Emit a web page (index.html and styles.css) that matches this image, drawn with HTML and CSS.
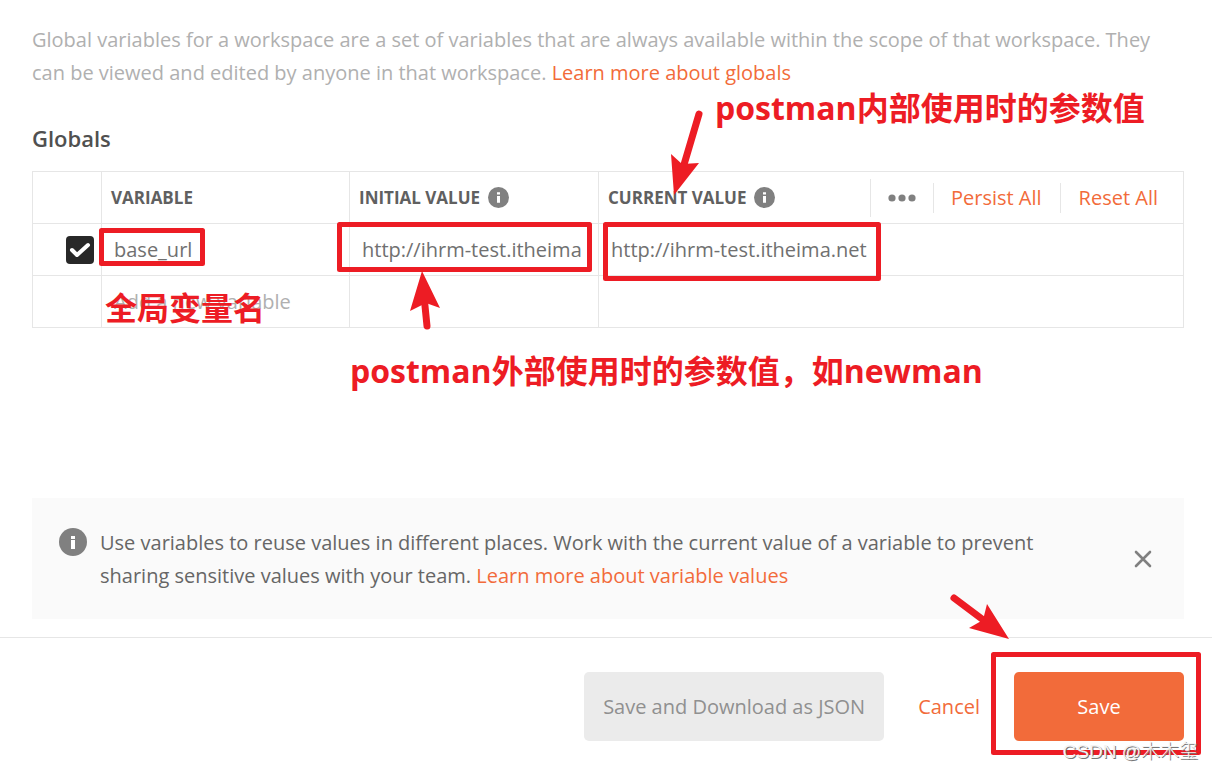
FILE: index.html
```html
<!DOCTYPE html>
<html lang="zh-CN">
<head>
    <meta charset="UTF-8">
    <title>Globals</title>
    <link rel="stylesheet" href="styles.css">
</head>
<body>
    <div class="page">
        <main class="content">
            <p class="intro">Global variables for a workspace are a set of variables that are always available within the scope of that workspace. They can be viewed and edited by anyone in that workspace. <a href="#">Learn more about globals</a></p>
            <h1 class="title">Globals</h1>
            <table class="variables">
                <colgroup>
                    <col class="col-check">
                    <col class="col-name">
                    <col class="col-value">
                    <col>
                </colgroup>
                <thead>
                    <tr>
                        <th></th>
                        <th>VARIABLE</th>
                        <th>
                            <div class="head">
                                INITIAL VALUE
                                <svg class="info" viewBox="0 0 28 28"><circle cx="14" cy="14" r="14" fill="#808080"/><path d="M12 7h4v3h-4zM12 12h4v9h-4z" fill="#fff"/></svg>
                            </div>
                        </th>
                        <th>
                            <div class="head">
                                CURRENT VALUE
                                <svg class="info" viewBox="0 0 28 28"><circle cx="14" cy="14" r="14" fill="#808080"/><path d="M12 7h4v3h-4zM12 12h4v9h-4z" fill="#fff"/></svg>
                                <div class="tools">
                                    <button class="more" aria-label="More">
                                        <svg width="28" height="8" viewBox="0 0 28 8" fill="#808080"><circle cx="4" cy="4" r="3.6"/><circle cx="14" cy="4" r="3.6"/><circle cx="24" cy="4" r="3.6"/></svg>
                                    </button>
                                    <button class="persist">Persist All</button>
                                    <button class="reset">Reset All</button>
                                </div>
                            </div>
                        </th>
                    </tr>
                </thead>
                <tbody>
                    <tr>
                        <td class="check"><input type="checkbox" aria-label="base_url" checked></td>
                        <td><input class="cell" type="text" aria-label="Variable" value="base_url"></td>
                        <td><input class="cell" type="text" aria-label="Initial value" value="http://ihrm-test.itheima.net"></td>
                        <td><input class="cell" type="text" aria-label="Current value" value="http://ihrm-test.itheima.net"></td>
                    </tr>
                    <tr>
                        <td></td>
                        <td><input class="cell" type="text" aria-label="New variable" placeholder="Add a new variable"></td>
                        <td></td>
                        <td></td>
                    </tr>
                </tbody>
            </table>
            <div class="notice">
                <svg class="notice-icon" viewBox="0 0 28 28"><circle cx="14" cy="14" r="14" fill="#808080"/><path d="M12 8h4v3h-4zM12 12h4v9h-4z" fill="#fff"/></svg>
                <p>Use variables to reuse values in different places. Work with the current value of a variable to prevent sharing sensitive values with your team. <a href="#">Learn more about variable values</a></p>
                <button class="close" aria-label="Close">
                    <svg width="18" height="18" viewBox="0 0 18 18"><path d="M2 2l14 14M16 2L2 16" stroke="#808080" stroke-width="2.6" stroke-linecap="round"/></svg>
                </button>
            </div>
        </main>
        <footer class="footer">
            <button class="btn download">Save and Download as JSON</button>
            <button class="btn cancel">Cancel</button>
            <button class="btn save">Save</button>
        </footer>

        <!-- 标注层 -->
        <svg class="marks" width="1212" height="771" viewBox="0 0 1212 771">
            <g fill="none" stroke="#ed1c24" stroke-width="5" stroke-linejoin="round">
                <rect x="101.5" y="230.5" width="101" height="33"/>
                <rect x="339.5" y="224.5" width="250" height="45"/>
                <rect x="605.5" y="224.5" width="273" height="54"/>
                <rect x="993.5" y="654.5" width="205" height="98"/>
            </g>
            <g stroke="#ed1c24" stroke-width="7" stroke-linecap="round">
                <path d="M699 114L683 168"/>
                <path d="M427 326L424 296"/>
                <path d="M954 598L986 622"/>
            </g>
            <g fill="#ed1c24">
                <path d="M674 195L671 154L682 164L699 163Z"/>
                <path d="M422 271L440 308L426 303L410 311Z"/>
                <path d="M1009 639L987 604L983 620L969 628Z"/>
            </g>
        </svg>
        <div class="note note-name">全局变量名</div>
        <div class="note note-inner">postman内部使用时的参数值</div>
        <div class="note note-outer">postman外部使用时的参数值，如newman</div>
        <div class="watermark">CSDN @木木玺</div>
    </div>
</body>
</html>
```
FILE: styles.css
```css
* {
    box-sizing: border-box;
    padding: 0;
    margin: 0;
}

body {
    background-color: #fff;
    color: #666;
    font: 20px/33px "Open Sans", "Noto Sans CJK SC", sans-serif;
}

a {
    color: #f26b3a;
    text-decoration: none;
}

button {
    border: none;
    background: none;
    color: #f26b3a;
    font: inherit;
    cursor: pointer;
}

.page {
    position: relative;
    min-height: 100vh;
    display: flex;
    flex-direction: column;
    overflow: hidden;
}

.content {
    flex: 1;
    padding: 23px 28px 17px 32px;
}

.intro {
    color: #b0b0b0;
}

.title {
    margin: 33px 0 16px;
    font-size: 22px;
    font-weight: 600;
    color: #505050;
}

/* 变量表格 */
.variables {
    width: 100%;
    table-layout: fixed;
    border-collapse: collapse;
}

.col-check {
    width: 69px;
}

.col-name {
    width: 248px;
}

.col-value {
    width: 249px;
}

.variables th,
.variables td {
    height: 52px;
    border: 1px solid #e6e6e6;
    text-align: left;
}

.variables th {
    padding-left: 9px;
    font-size: 17px;
    font-weight: 700;
    color: #606060;
}

.variables td {
    padding: 0 16px 1px 12px;
}

.head {
    display: flex;
    align-items: center;
    gap: 8px;
}

.info {
    width: 21px;
    height: 21px;
}

.tools {
    display: flex;
    align-items: center;
    margin-left: auto;
    font-size: 20px;
    font-weight: 400;
}

.tools button {
    height: 30px;
    border-left: 1px solid #e6e6e6;
    line-height: 30px;
}

.tools .more {
    height: 38px;
    padding: 0 17px;
    display: flex;
    align-items: center;
}

.persist {
    padding: 0 18px 0 17px;
}

.reset {
    padding: 0 25px 0 18px;
}

.variables .check {
    padding: 0 7px;
    text-align: right;
}

.check input {
    appearance: none;
    display: block;
    width: 28px;
    height: 28px;
    margin-left: auto;
    border-radius: 4px;
    background: #282828 url("data:image/svg+xml,%3Csvg xmlns='http://www.w3.org/2000/svg' viewBox='0 0 28 28'%3E%3Cpath d='M6 14l5 5L22 9' fill='none' stroke='white' stroke-width='4' stroke-linecap='round' stroke-linejoin='round'/%3E%3C/svg%3E");
}

.cell {
    display: block;
    width: 100%;
    height: 33px;
    border: none;
    outline: none;
    background: none;
    color: #707070;
    font: inherit;
}

.cell::placeholder {
    color: #b0b0b0;
}

/* 提示条 */
.notice {
    display: flex;
    align-items: center;
    margin-top: 170px;
    padding: 28px 32px 27px 27px;
    background-color: #fafafa;
}

.notice p {
    flex: 1;
    padding-right: 48px;
}

.notice-icon {
    align-self: flex-start;
    width: 28px;
    height: 28px;
    margin: 2px 13px 0 0;
}

.close {
    display: flex;
}

.footer {
    display: flex;
    justify-content: flex-end;
    padding: 34px 28px 30px;
    border-top: 1px solid #e6e6e6;
}

.btn {
    height: 69px;
    padding-bottom: 1px;
    border-radius: 5px;
}

.download {
    padding: 0 19px 1px;
    background-color: #ebebeb;
    color: #909090;
}

.cancel {
    padding: 0 34px 1px;
}

.save {
    width: 170px;
    background-color: #f26b3a;
    color: #fff;
}

/* 红色标注 */
.marks {
    position: absolute;
    top: 0;
    left: 0;
    pointer-events: none;
}

.note {
    position: absolute;
    color: #ed1c24;
    font-size: 32px;
    font-weight: 700;
    line-height: 40px;
    white-space: nowrap;
}

.note-name {
    top: 288px;
    left: 105px;
}

.note-inner {
    top: 88px;
    left: 715px;
}

.note-outer {
    top: 351px;
    left: 350px;
}

.watermark {
    position: absolute;
    right: 14px;
    bottom: 6px;
    color: #f4f4f4;
    font-size: 19px;
    font-weight: 300;
    line-height: 26px;
    font-family: "Liberation Sans", "Noto Sans CJK SC", sans-serif;
    text-shadow: 1px 1px 0 #777;
}
```
